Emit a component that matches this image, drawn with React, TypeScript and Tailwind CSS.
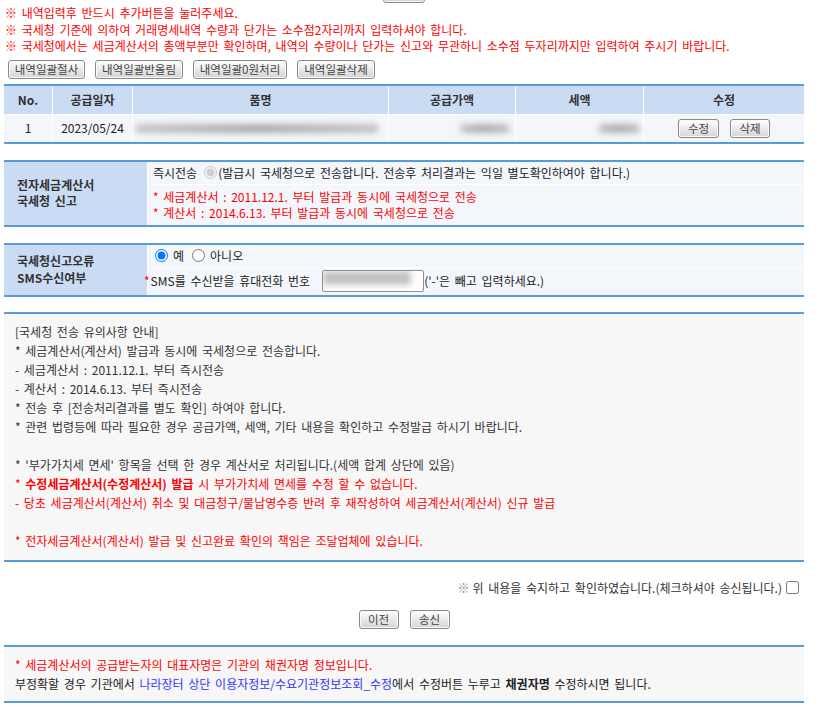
import React from "react";

const btn =
  "h-[19px] border border-[#8a8a8a] rounded-[3px] bg-linear-to-b from-white to-[#d4d4d4] text-[#444] text-[11.5px] leading-[16px] [word-spacing:0px] shadow-[inset_0_0_0_1px_#fafafa] flex items-center justify-center shrink-0";

function Blur({ w, h = 9 }: { w: number; h?: number }) {
  return (
    <div className="relative" style={{ width: w, height: h }}>
      <div className="absolute inset-0 rounded-full bg-linear-to-r from-[#c4c4c4] via-[#a9a9a9] to-[#c2c2c2] blur-[3px]" />
    </div>
  );
}

export default function App() {
  const head = "h-[28px] bg-[#cadcf4] flex items-center justify-center font-bold text-[#333]";
  const cell = "h-[27px] bg-[#f3f7fc] flex items-center";
  return (
    <div className="w-[822px] h-[716px] overflow-hidden bg-white font-['Noto_Sans_CJK_KR','Noto_Sans',sans-serif] text-[12px] [word-spacing:2px] text-[#222]">
      <div className="w-[800px] ml-[4px]">
        {/* cut-off button at top */}
        <div className="h-[3px] overflow-hidden flex justify-center">
          <div className={btn + " w-[42px] -mt-[16px]"} />
        </div>

        {/* red notes */}
        <div className="pt-[2px] pl-[1px] leading-[16.5px] text-[#f00]">
          <div>※ 내역입력후 반드시 추가버튼을 눌러주세요.</div>
          <div>※ 국세청 기준에 의하여 거래명세내역 수량과 단가는 소수점2자리까지 입력하셔야 합니다.</div>
          <div>※ 국세청에서는 세금계산서의 총액부분만 확인하며, 내역의 수량이나 단가는 신고와 무관하니 소수점 두자리까지만 입력하여 주시기 바랍니다.</div>
        </div>

        {/* bulk buttons */}
        <div className="mt-[5px] pl-[4px] flex gap-[10px]">
          <button className={btn + " w-[77px]"}>내역일괄절사</button>
          <button className={btn + " w-[88px]"}>내역일괄반올림</button>
          <button className={btn + " w-[94px]"}>내역일괄0원처리</button>
          <button className={btn + " w-[78px]"}>내역일괄삭제</button>
        </div>

        {/* item table */}
        <div className="mt-[5px] border-y-2 border-[#5b9bd5]">
          <div className="grid grid-cols-[48px_79px_255px_126px_127px_160px] gap-px bg-white">
            <div className={head}>No.</div>
            <div className={head}>공급일자</div>
            <div className={head}>품명</div>
            <div className={head}>공급가액</div>
            <div className={head}>세액</div>
            <div className={head}>수정</div>
            <div className={cell + " justify-center"}>1</div>
            <div className={cell + " justify-center"}>2023/05/24</div>
            <div className={cell + " pl-[2px]"}>
              <Blur w={244} />
            </div>
            <div className={cell + " justify-end pr-[5px]"}>
              <Blur w={50} />
            </div>
            <div className={cell + " justify-end pr-[3px]"}>
              <Blur w={42} />
            </div>
            <div className={cell + " justify-center gap-[11px]"}>
              <button className={btn + " w-[41px]"}>수정</button>
              <button className={btn + " w-[40px]"}>삭제</button>
            </div>
          </div>
        </div>

        {/* e-tax report */}
        <div className="mt-[16px] border-y-2 border-[#5b9bd5]">
          <div className="grid grid-cols-[143px_656px] gap-px bg-white">
            <div className="row-span-2 bg-[#cadcf4] flex flex-col justify-center pl-[13px] font-bold text-[#333] leading-[16px]">
              <div>전자세금계산서</div>
              <div>국세청 신고</div>
            </div>
            <div className="h-[22px] bg-[#f3f7fc] flex items-center pl-[5px]">
              <span>즉시전송</span>
              <input type="radio" disabled defaultChecked className="ml-[7px] mr-[1px] m-0 w-[13px] h-[13px]" />
              <span>(발급시 국세청으로 전송합니다. 전송후 처리결과는 익일 별도확인하여야 합니다.)</span>
            </div>
            <div className="h-[40px] bg-[#f3f7fc] flex flex-col justify-center pl-[5px] leading-[15.5px] text-[#f00]">
              <div>* 세금계산서 : 2011.12.1. 부터 발급과 동시에 국세청으로 전송</div>
              <div>* 계산서 : 2014.6.13. 부터 발급과 동시에 국세청으로 전송</div>
            </div>
          </div>
        </div>

        {/* SMS */}
        <div className="mt-[16px] border-y-2 border-[#5b9bd5]">
          <div className="grid grid-cols-[143px_656px] gap-px bg-white">
            <div className="row-span-2 bg-[#cadcf4] flex flex-col justify-center pl-[13px] font-bold text-[#333] leading-[16.5px]">
              <div>국세청신고오류</div>
              <div>SMS수신여부</div>
            </div>
            <div className="h-[22px] bg-[#f3f7fc] flex items-center pl-[7px]">
              <input type="radio" name="sms" defaultChecked className="m-0 w-[13px] h-[13px]" />
              <span className="ml-[5px]">예</span>
              <input type="radio" name="sms" className="m-0 ml-[8px] w-[13px] h-[13px]" />
              <span className="ml-[5px]">아니오</span>
            </div>
            <div className="h-[27px] bg-[#f3f7fc] flex items-center">
              <span className="text-[#f00] -ml-[4px]">*</span>
              <span className="ml-[1px]">SMS를 수신받을 휴대전화 번호</span>
              <div className="relative ml-[12px] w-[102px] h-[22px] border border-[#8f8f8f] rounded-[2px] bg-white overflow-hidden">
                <div className="absolute left-0 top-[0px] w-[88px] h-[14px] bg-[#c2c2c2] blur-[3px]" />
              </div>
              <span>('-'은 빼고 입력하세요.)</span>
            </div>
          </div>
        </div>

        {/* notice */}
        <div className="mt-[15px] border-y-2 border-[#5b9bd5] bg-[#f7f7f7] pt-[8px] pb-[10px] pl-[11px] leading-[19px] text-[#333]">
          <div>[국세청 전송 유의사항 안내]</div>
          <div>* 세금계산서(계산서) 발급과 동시에 국세청으로 전송합니다.</div>
          <div>- 세금계산서 : 2011.12.1. 부터 즉시전송</div>
          <div>- 계산서 : 2014.6.13. 부터 즉시전송</div>
          <div>* 전송 후 [전송처리결과를 별도 확인] 하여야 합니다.</div>
          <div>* 관련 법령등에 따라 필요한 경우 공급가액, 세액, 기타 내용을 확인하고 수정발급 하시기 바랍니다.</div>
          <div className="h-[19px]" />
          <div>* '부가가치세 면세' 항목을 선택 한 경우 계산서로 처리됩니다.(세액 합계 상단에 있음)</div>
          <div className="text-[#f00]">
            * <span className="font-bold">수정세금계산서(수정계산서) 발급</span> 시 부가가치세 면세를 수정 할 수 없습니다.
          </div>
          <div className="text-[#f00]">- 당초 세금계산서(계산서) 취소 및 대금청구/물납영수증 반려 후 재작성하여 세금계산서(계산서) 신규 발급</div>
          <div className="h-[19px]" />
          <div className="text-[#f00]">* 전자세금계산서(계산서) 발급 및 신고완료 확인의 책임은 조달업체에 있습니다.</div>
        </div>

        {/* confirm */}
        <div className="mt-[17px] h-[18px] flex items-center justify-end pr-[5px] text-[#333]">
          <span className="text-[#888]">※</span>
          <span className="ml-[3px]">위 내용을 숙지하고 확인하였습니다.(체크하셔야 송신됩니다.)</span>
          <input type="checkbox" className="m-0 ml-[4px] w-[13px] h-[13px]" />
        </div>

        <div className="mt-[13px] flex justify-center gap-[11px]">
          <button className={btn + " w-[40px]"}>이전</button>
          <button className={btn + " w-[40px]"}>송신</button>
        </div>

        {/* bottom info */}
        <div className="mt-[16px] border-y-2 border-[#5b9bd5] bg-[#f7f7f7] pt-[8px] pb-[8px] pl-[11px] leading-[19px] text-[#222]">
          <div className="text-[#f00]">* 세금계산서의 공급받는자의 대표자명은 기관의 채권자명 정보입니다.</div>
          <div>
            부정확할 경우 기관에서 <span className="text-[#3333ff]">나라장터 상단 이용자정보/수요기관정보조회_수정</span>에서 수정버튼 누루고{" "}
            <span className="font-bold">채권자명</span> 수정하시면 됩니다.
          </div>
        </div>
      </div>
    </div>
  );
}
